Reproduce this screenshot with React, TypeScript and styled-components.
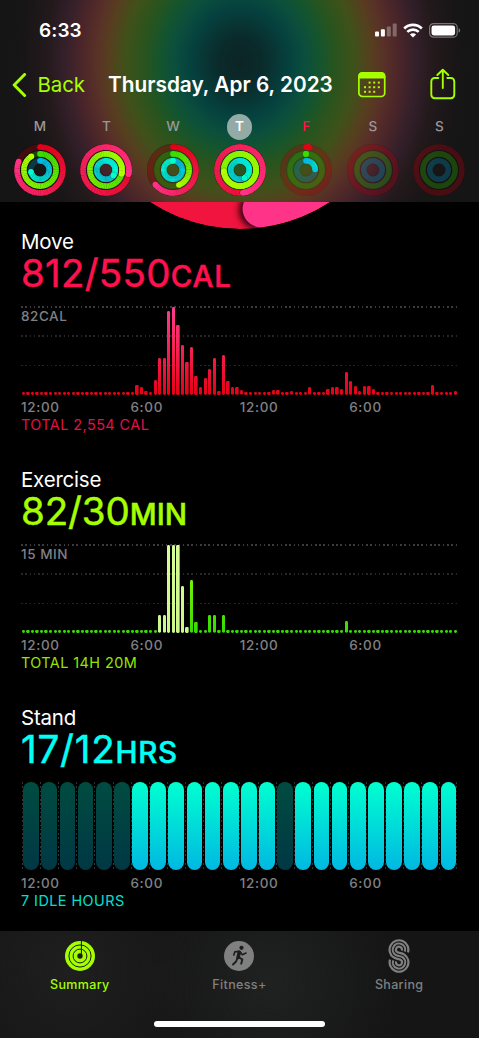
import React from "react";
import styled, { createGlobalStyle, css } from "styled-components";

const LIME = "#a6ff00";

const GlobalStyle = createGlobalStyle`
  body {
    margin: 0;
    background: #fff;
    font-family: Inter, "Liberation Sans", sans-serif;
    -webkit-font-smoothing: antialiased;
  }
`;

const Screen = styled.main`
  width: 479px;
  height: 1038px;
  display: flex;
  flex-direction: column;
  overflow: hidden;
  background: #000;
  color: #fff;
`;

const Header = styled.header`
  height: 202px;
  flex: none;
  display: flex;
  flex-direction: column;
  background: radial-gradient(
      ellipse 250px 280px at 240px 62px,
      #0c2425 0%,
      #0a2b2b 9%,
      #05423f 20%,
      #0b4e3d 26%,
      #14552e 32%,
      #28541e 38%,
      #40511a 46%,
      #573e1f 53%,
      #583028 58%,
      #4a2529 64%,
      #35202a 70%,
      #22191b 78%,
      #171516 88%,
      #151515 100%
    );
`;

const StatusBar = styled.div`
  height: 60px;
  display: flex;
  align-items: center;
  justify-content: space-between;
  padding: 0 18px 0 39px;
`;

const Clock = styled.span`
  font-size: 19px;
  font-weight: 600;
  letter-spacing: 0.1px;
`;

const StatusIcons = styled.div`
  display: flex;
  align-items: center;
  gap: 6px;
`;

const NavBar = styled.div`
  height: 50px;
  display: flex;
  align-items: center;
  padding-left: 12px;
`;

const BackLink = styled.a`
  width: 96px;
  display: flex;
  align-items: center;
  gap: 10.5px;
  color: ${LIME};
  font-size: 20.5px;
  letter-spacing: -0.1px;
`;

const BackLabel = styled.span`
  padding-bottom: 2px;
`;

const DateTitle = styled.h1`
  width: 250px;
  margin: 0;
  padding-bottom: 2px;
  font-size: 20.8px;
  font-weight: 600;
  letter-spacing: 0;
  white-space: nowrap;
`;

const ShareSlot = styled.span`
  display: flex;
  margin: -2px 0 0 44px;
`;

const Week = styled.div`
  display: grid;
  grid-template-columns: repeat(7, 66.6px);
  padding-left: 6.5px;
`;

const Day = styled.div`
  display: flex;
  flex-direction: column;
  align-items: center;
  gap: 4px;
  padding-top: 4px;
`;

const DayLetter = styled.span<{ $selected?: boolean; $today?: boolean }>`
  width: 25.5px;
  height: 25.5px;
  box-sizing: border-box;
  padding-bottom: 1px;
  border-radius: 50%;
  display: flex;
  align-items: center;
  justify-content: center;
  font-size: 13.5px;
  font-weight: 500;
  color: ${(p) => (p.$today ? "#ff1150" : "#99999b")};
  ${(p) =>
    p.$selected &&
    css`
      background: #93aaa6;
      color: #fff;
      font-weight: 600;
    `}
`;

const Content = styled.div`
  flex: 1;
  display: flex;
  flex-direction: column;
  min-height: 0;
`;

const RingPeek = styled.svg`
  display: block;
  flex: none;
  width: 479px;
  height: 27px;
`;

const Section = styled.section`
  height: 238px;
  flex: none;
  padding: 0 21px;
`;

const Title = styled.h2`
  margin: 0;
  height: 26px;
  line-height: 26px;
  font-size: 20.5px;
  font-weight: 400;
  letter-spacing: -0.2px;
`;

const Value = styled.div<{ $color: string; $tracking: number }>`
  height: 36px;
  line-height: 36px;
  font-size: 38.5px;
  font-weight: 400;
  -webkit-text-stroke: 0.5px ${(p) => p.$color};
  stroke-linejoin: round;
  white-space: nowrap;
  color: ${(p) => p.$color};
  letter-spacing: ${(p) => p.$tracking}px;
`;

const Unit = styled.span<{ $tracking: number }>`
  font-size: 29.5px;
  font-weight: 500;
  letter-spacing: ${(p) => p.$tracking}px;
`;

const Plot = styled.div`
  display: grid;
  height: 89px;
  margin: 15px 0 0;
  > * {
    grid-area: 1 / 1;
  }
`;

const GridLines = styled.div`
  height: 60px;
  display: flex;
  flex-direction: column;
  justify-content: space-between;
`;

const DottedLine = styled.i<{ $strong?: boolean }>`
  height: 1.5px;
  width: 437px;
  background: repeating-linear-gradient(
    90deg,
    ${(p) => (p.$strong ? "#3c3c3c" : "#272727")} 0 1.6px,
    transparent 1.6px 4.26px
  );
`;

const PlotLabel = styled.span`
  margin-top: 2px;
  height: 16px;
  line-height: 16px;
  font-size: 13.5px;
  font-weight: 500;
  letter-spacing: 0.55px;
  color: #808084;
`;

const Bars = styled.div`
  width: 435.6px;
  margin-left: 0.7px;
  display: flex;
  align-items: flex-end;
  justify-content: space-between;
`;

const Bar = styled.i<{ $h: number; $fill: string }>`
  width: 3.3px;
  height: ${(p) => p.$h}px;
  border-radius: 1.4px;
  background: ${(p) => p.$fill} bottom / 100% 88px no-repeat;
`;

const Hours = styled.div`
  display: grid;
  grid-template-columns: repeat(24, 18.15px);
  height: 88.3px;
  margin-left: 0.8px;
`;

const Hour = styled.div`
  display: flex;
  justify-content: center;
  background: repeating-linear-gradient(#333 0 1.6px, transparent 1.6px 4.26px)
    left / 1.4px 100% no-repeat;
  &:last-child {
    background: repeating-linear-gradient(#333 0 1.6px, transparent 1.6px 4.26px)
        left / 1.4px 100% no-repeat,
      repeating-linear-gradient(#333 0 1.6px, transparent 1.6px 4.26px) right /
        1.4px 100% no-repeat;
  }
`;

const Pill = styled.i<{ $idle: boolean }>`
  width: 15.7px;
  margin-left: 0.6px;
  border-radius: 8px;
  background: ${(p) =>
    p.$idle
      ? "linear-gradient(#004c41, #003844)"
      : "linear-gradient(#00ffd0, #00b8e2)"};
`;

const Axis = styled.div`
  display: grid;
  grid-template-columns: repeat(4, 109.4px);
  margin-top: 2.5px;
  height: 18px;
  line-height: 18px;
  font-size: 13.5px;
  font-weight: 500;
  letter-spacing: 0.65px;
  color: #808084;
`;

const Total = styled.div<{ $color: string }>`
  height: 17px;
  line-height: 17px;
  font-size: 14.4px;
  letter-spacing: 0.45px;
  color: ${(p) => p.$color};
`;

const TabBar = styled.nav`
  height: 107.5px;
  flex: none;
  display: flex;
  flex-direction: column;
  align-items: center;
  background: radial-gradient(circle 130px at 70px 40px, #1f1f1f, transparent),
    radial-gradient(circle 130px at 270px 50px, #202121, transparent), #151515;
`;

const Tabs = styled.div`
  width: 100%;
  height: 90px;
  display: grid;
  grid-template-columns: repeat(3, 1fr);
`;

const Tab = styled.a<{ $active?: boolean }>`
  display: flex;
  flex-direction: column;
  align-items: center;
  gap: 4.5px;
  padding-top: 8.2px;
  font-size: 12.5px;
  font-weight: 500;
  letter-spacing: 0.35px;
  color: ${(p) => (p.$active ? LIME : "#808080")};
`;

const HomeIndicator = styled.i`
  width: 171px;
  height: 6.5px;
  border-radius: 4px;
  background: #fff;
`;

type RGB = [number, number, number];
const RINGS: { r: number; from: RGB; to: RGB }[] = [
  { r: 22.9, from: [227, 0, 20], to: [255, 50, 136] },
  { r: 16.1, from: [56, 222, 0], to: [178, 255, 0] },
  { r: 9.2, from: [0, 184, 232], to: [0, 255, 205] },
];

const mix = (a: RGB, b: RGB, t: number) =>
  `rgb(${a.map((v, i) => Math.round(v + (b[i] - v) * t)).join(",")})`;

const point = (r: number, deg: number) => {
  const a = ((deg - 90) * Math.PI) / 180;
  return [26 + r * Math.cos(a), 26 + r * Math.sin(a)];
};

function Rings({ laps }: { laps: (number | null)[] }) {
  return (
    <svg width="52" height="52" viewBox="0 0 52 52" fill="none">
      {RINGS.map(({ r, from, to }, k) => {
        const lap = laps[k];
        const base = (
          <g>
            <circle
              cx="26"
              cy="26"
              r={r}
              stroke="#000"
              strokeOpacity={lap !== null && lap > 0.3 ? 0.28 : 0.12}
              strokeWidth="6.8"
            />
            <circle cx="26" cy="26" r={r} stroke={mix(from, to, 0)} strokeOpacity=".25" strokeWidth="5.6" />
          </g>
        );
        if (lap === null) return <g key={k}>{base}</g>;
        const sweep = lap * 360;
        const steps = Math.max(1, Math.ceil(sweep / 6));
        const end = point(r, sweep);
        const start = point(r, 0);
        return (
          <g key={k}>
            {base}
            <circle cx={start[0]} cy={start[1]} r="2.8" fill={mix(from, to, 0)} />
            {Array.from({ length: steps }, (_, i) => {
              const a = point(r, (sweep * i) / steps - 0.5);
              const b = point(r, (sweep * (i + 1)) / steps);
              return (
                <path
                  key={i}
                  d={`M${a[0]} ${a[1]}A${r} ${r} 0 0 1 ${b[0]} ${b[1]}`}
                  stroke={mix(from, to, i / steps)}
                  strokeWidth="5.6"
                />
              );
            })}
            {lap > 1 && (
              <circle cx={end[0]} cy={end[1]} r="3.1" stroke="#000" strokeOpacity=".3" strokeWidth=".8" />
            )}
            <circle cx={end[0]} cy={end[1]} r="2.8" fill={mix(from, to, lap > 0.3 ? 1 : lap)} />
            {lap > 1 && (
              <path
                d={`M${point(r, sweep - 12).join(" ")}A${r} ${r} 0 0 1 ${end.join(" ")}`}
                stroke={mix(from, to, 1)}
                strokeWidth="5.6"
              />
            )}
          </g>
        );
      })}
    </svg>
  );
}

const WEEK: { letter: string; laps: (number | null)[]; selected?: boolean; today?: boolean }[] = [
  { letter: "M", laps: [0.81, 0.91, 0.72] },
  { letter: "T", laps: [1.28, 1.29, 1.35] },
  { letter: "W", laps: [0.64, 0.44, 1] },
  { letter: "T", laps: [1.48, 2.74, 1.42], selected: true },
  { letter: "F", laps: [0.025, 0, 0.24], today: true },
  { letter: "S", laps: [null, null, null] },
  { letter: "S", laps: [null, null, null] },
];

const series = (values: Record<number, number>) =>
  Array.from({ length: 96 }, (_, i) => values[i] ?? 3);

const MOVE = series({
  25: 10.3, 26: 7.7, 27: 4, 29: 15, 30: 37.3, 31: 37.3, 32: 84, 33: 88, 34: 70.3,
  35: 50, 36: 32.7, 37: 48, 38: 19, 39: 7.7, 40: 17.3, 41: 26, 42: 37.3, 43: 4.3,
  44: 40, 45: 13.7, 46: 7.7, 47: 7.7, 48: 4.7, 55: 4.7, 56: 4.7, 59: 3.7, 63: 7.7,
  67: 6, 68: 7.7, 69: 7.7, 70: 6, 71: 23.3, 72: 14.3, 73: 8.7, 74: 4, 75: 9.3,
  76: 9.3, 77: 6, 90: 10, 95: 4.5,
});

const EXERCISE = series({
  30: 17.7, 31: 17.7, 32: 88, 33: 88, 34: 88, 35: 47, 36: 6, 37: 52.7, 38: 11.3,
  41: 17.7, 42: 17.7, 44: 17.7, 71: 11.7,
});

const IDLE_HOURS = [0, 1, 2, 3, 4, 5, 14];

const MOVE_FILL = "linear-gradient(#ff3c92, #f5204f 50%, #e60013)";
const EXERCISE_FILL = "linear-gradient(#9cff00, #35dc00)";
const WORKOUT_FILL = "linear-gradient(#d6ff96, #ccf78a)";

function HistoryPlot({ label, values, fill }: { label: string; values: number[]; fill: (i: number) => string }) {
  return (
    <Plot>
      <GridLines>
        <DottedLine $strong />
        <DottedLine />
        <DottedLine />
      </GridLines>
      <PlotLabel>{label}</PlotLabel>
      <Bars>
        {values.map((v, i) => (
          <Bar key={i} $h={v} $fill={fill(i)} />
        ))}
      </Bars>
    </Plot>
  );
}

function TimeAxis() {
  return (
    <Axis>
      <span>12:00</span>
      <span>6:00</span>
      <span>12:00</span>
      <span>6:00</span>
    </Axis>
  );
}

const SignalIcon = () => (
  <svg width="22" height="14" viewBox="0 0 22 14" fill="#fff">
    <rect x="0" y="8.6" width="4" height="5" rx="1" />
    <rect x="5.9" y="6.2" width="4" height="7.4" rx="1" />
    <rect x="11.8" y="3.4" width="4" height="10.2" rx="1" opacity=".3" />
    <rect x="17.7" y="0.4" width="4" height="13.2" rx="1" opacity=".3" />
  </svg>
);

const WifiIcon = () => (
  <svg width="20" height="15" viewBox="0 0 20 15" fill="none" stroke="#fff" strokeWidth="2.6">
    <path d="M1.2 5.5C6 .7 14 .7 18.8 5.5" />
    <path d="M4.3 8.9c3.2-3.1 8.2-3.1 11.4 0" />
    <path d="M6.9 11.4c1.8-1.6 4.4-1.6 6.2 0L10 14.5z" fill="#fff" stroke="none" />
  </svg>
);

const BatteryIcon = () => (
  <svg width="32" height="15" viewBox="0 0 32 15" fill="none">
    <rect x=".6" y=".6" width="27.6" height="13.6" rx="4" stroke="#fff" strokeOpacity=".4" strokeWidth="1.2" />
    <rect x="2.5" y="2.4" width="23.6" height="10" rx="2.3" fill="#fff" />
    <path d="M29.7 5.2c1.9.7 1.9 3.7 0 4.4z" fill="#fff" fillOpacity=".45" />
  </svg>
);

const BackIcon = () => (
  <svg width="15" height="25" viewBox="0 0 15 25" fill="none">
    <path d="M12.6 1.5L2.2 12l10.4 10.5" stroke={LIME} strokeWidth="3" strokeLinecap="round" strokeLinejoin="round" />
  </svg>
);

const CalendarIcon = () => (
  <svg width="28" height="26" viewBox="0 0 28 26" fill="none">
    <rect x=".9" y=".9" width="25.8" height="23.6" rx="3.6" stroke={LIME} strokeWidth="1.7" />
    <path d="M.3 6.4V4.2A4 4 0 0 1 4.2.2h19.2a4 4 0 0 1 3.9 4v2.2z" fill={LIME} />
    <g fill={LIME}>
      {[10.6, 15.2, 19.8].map((y, row) =>
        [6, 10.6, 15.2, 19.8].map((x, col) =>
          (row === 0 && col === 0) || (row === 2 && col === 3) ? null : (
            <rect key={`${row}${col}`} x={x} y={y - 1} width="2" height="2" />
          )
        )
      )}
    </g>
  </svg>
);

const ShareIcon = () => (
  <svg width="26" height="32" viewBox="0 0 26 32" fill="none" stroke={LIME} strokeWidth="1.9" strokeLinecap="round" strokeLinejoin="round">
    <path d="M8.3 10H4.7A3.4 3.4 0 0 0 1.3 13.4v13.4a3.4 3.4 0 0 0 3.4 3.4h16.2a3.4 3.4 0 0 0 3.4-3.4V13.4A3.4 3.4 0 0 0 20.9 10h-3.6" />
    <path d="M12.8 20V1.8M7.3 7l5.5-5.3L18.3 7" />
  </svg>
);

const SummaryIcon = () => (
  <svg width="34" height="34" viewBox="0 0 34 34" fill="none">
    <circle cx="17" cy="17" r="15" fill={LIME} />
    <g stroke="#1a1c10" strokeWidth="1">
      <circle cx="17" cy="17" r="11.1" />
      <circle cx="17" cy="17" r="6.9" />
      <path d="M18.4 2v13" />
    </g>
    <circle cx="17" cy="17" r="2.7" fill="#1c1c1c" />
  </svg>
);

const RunnerIcon = () => (
  <svg width="34" height="34" viewBox="0 0 34 34" fill="none">
    <circle cx="17" cy="17" r="15" fill="#808080" />
    <circle cx="19.5" cy="8.8" r="2.1" fill="#1d1d1d" />
    <g stroke="#1d1d1d" strokeLinecap="round" strokeLinejoin="round">
      <path d="M17.3 13.3l-1.2 5" strokeWidth="3.6" />
      <path d="M17 12.4l-4.2.5-1 3.2" strokeWidth="1.6" />
      <path d="M18.3 13l2 2.7 3.7-1.7" strokeWidth="1.6" />
      <path d="M16.7 18.3l3.7 2-1.2 4.4" strokeWidth="1.9" />
      <path d="M15.3 19.3l-1.2 3.2-3.1 3" strokeWidth="1.9" />
    </g>
  </svg>
);

const SharingIcon = () => {
  const d =
    "M22.9 12.5A6.2 6.2 0 1 0 13.5 15.8C15.2 17 18.8 17 20.5 18.2A6.2 6.2 0 1 1 11.1 21.5";
  return (
    <svg width="34" height="34" viewBox="0 0 34 34" fill="none">
      <path d={d} stroke="#808080" strokeWidth="8.6" />
      <path d={d} stroke="#161616" strokeWidth="4.3" />
      <path d={d} stroke="#808080" strokeWidth="2.1" />
    </svg>
  );
};

export default function App() {
  return (
    <>
      <GlobalStyle />
      <Screen>
        <Header>
          <StatusBar>
            <Clock>6:33</Clock>
            <StatusIcons>
              <SignalIcon />
              <WifiIcon />
              <BatteryIcon />
            </StatusIcons>
          </StatusBar>
          <NavBar>
            <BackLink>
              <BackIcon />
              <BackLabel>Back</BackLabel>
            </BackLink>
            <DateTitle>Thursday, Apr 6, 2023</DateTitle>
            <CalendarIcon />
            <ShareSlot>
              <ShareIcon />
            </ShareSlot>
          </NavBar>
          <Week>
            {WEEK.map((d, i) => (
              <Day key={i}>
                <DayLetter $selected={d.selected} $today={d.today}>
                  {d.letter}
                </DayLetter>
                <Rings laps={d.laps} />
              </Day>
            ))}
          </Week>
        </Header>
        <Content>
          <RingPeek viewBox="0 202 479 27">
            <defs>
              <filter id="capShadow" x="-50%" y="-50%" width="200%" height="200%">
                <feGaussianBlur stdDeviation="3" />
              </filter>
              <clipPath id="disc">
                <circle cx="240" cy="65.5" r="163.5" />
              </clipPath>
            </defs>
            <g clipPath="url(#disc)">
              <circle cx="240" cy="65.5" r="145" stroke="#f0143f" strokeWidth="37" fill="none" />
              <circle cx="258" cy="210" r="19" fill="#300010" filter="url(#capShadow)" />
              <path
                d="M260.8 209A145 145 0 0 0 370 130"
                stroke="#ff3388"
                strokeWidth="36.5"
                strokeLinecap="round"
                fill="none"
              />
            </g>
          </RingPeek>
          <Section>
            <Title>Move</Title>
            <Value $color="#ff1150" $tracking={0.25}>
              812/550<Unit $tracking={0.8}>CAL</Unit>
            </Value>
            <HistoryPlot label="82CAL" values={MOVE} fill={() => MOVE_FILL} />
            <TimeAxis />
            <Total $color="#e0104a">TOTAL 2,554 CAL</Total>
          </Section>
          <Section>
            <Title>Exercise</Title>
            <Value $color={LIME} $tracking={-0.1}>
              82/30<Unit $tracking={0}>MIN</Unit>
            </Value>
            <HistoryPlot
              label="15 MIN"
              values={EXERCISE}
              fill={(i) => (i >= 30 && i <= 36 ? WORKOUT_FILL : EXERCISE_FILL)}
            />
            <TimeAxis />
            <Total $color="#96e600">TOTAL 14H 20M</Total>
          </Section>
          <Section>
            <Title>Stand</Title>
            <Value $color="#00fff6" $tracking={0.8}>
              17/12<Unit $tracking={0.7}>HRS</Unit>
            </Value>
            <Plot>
              <Hours>
                {Array.from({ length: 24 }, (_, i) => (
                  <Hour key={i}>
                    <Pill $idle={IDLE_HOURS.includes(i)} />
                  </Hour>
                ))}
              </Hours>
            </Plot>
            <TimeAxis />
            <Total $color="#00e0d2">7 IDLE HOURS</Total>
          </Section>
        </Content>
        <TabBar>
          <Tabs>
            <Tab $active>
              <SummaryIcon />
              Summary
            </Tab>
            <Tab>
              <RunnerIcon />
              Fitness+
            </Tab>
            <Tab>
              <SharingIcon />
              Sharing
            </Tab>
          </Tabs>
          <HomeIndicator />
        </TabBar>
      </Screen>
    </>
  );
}
